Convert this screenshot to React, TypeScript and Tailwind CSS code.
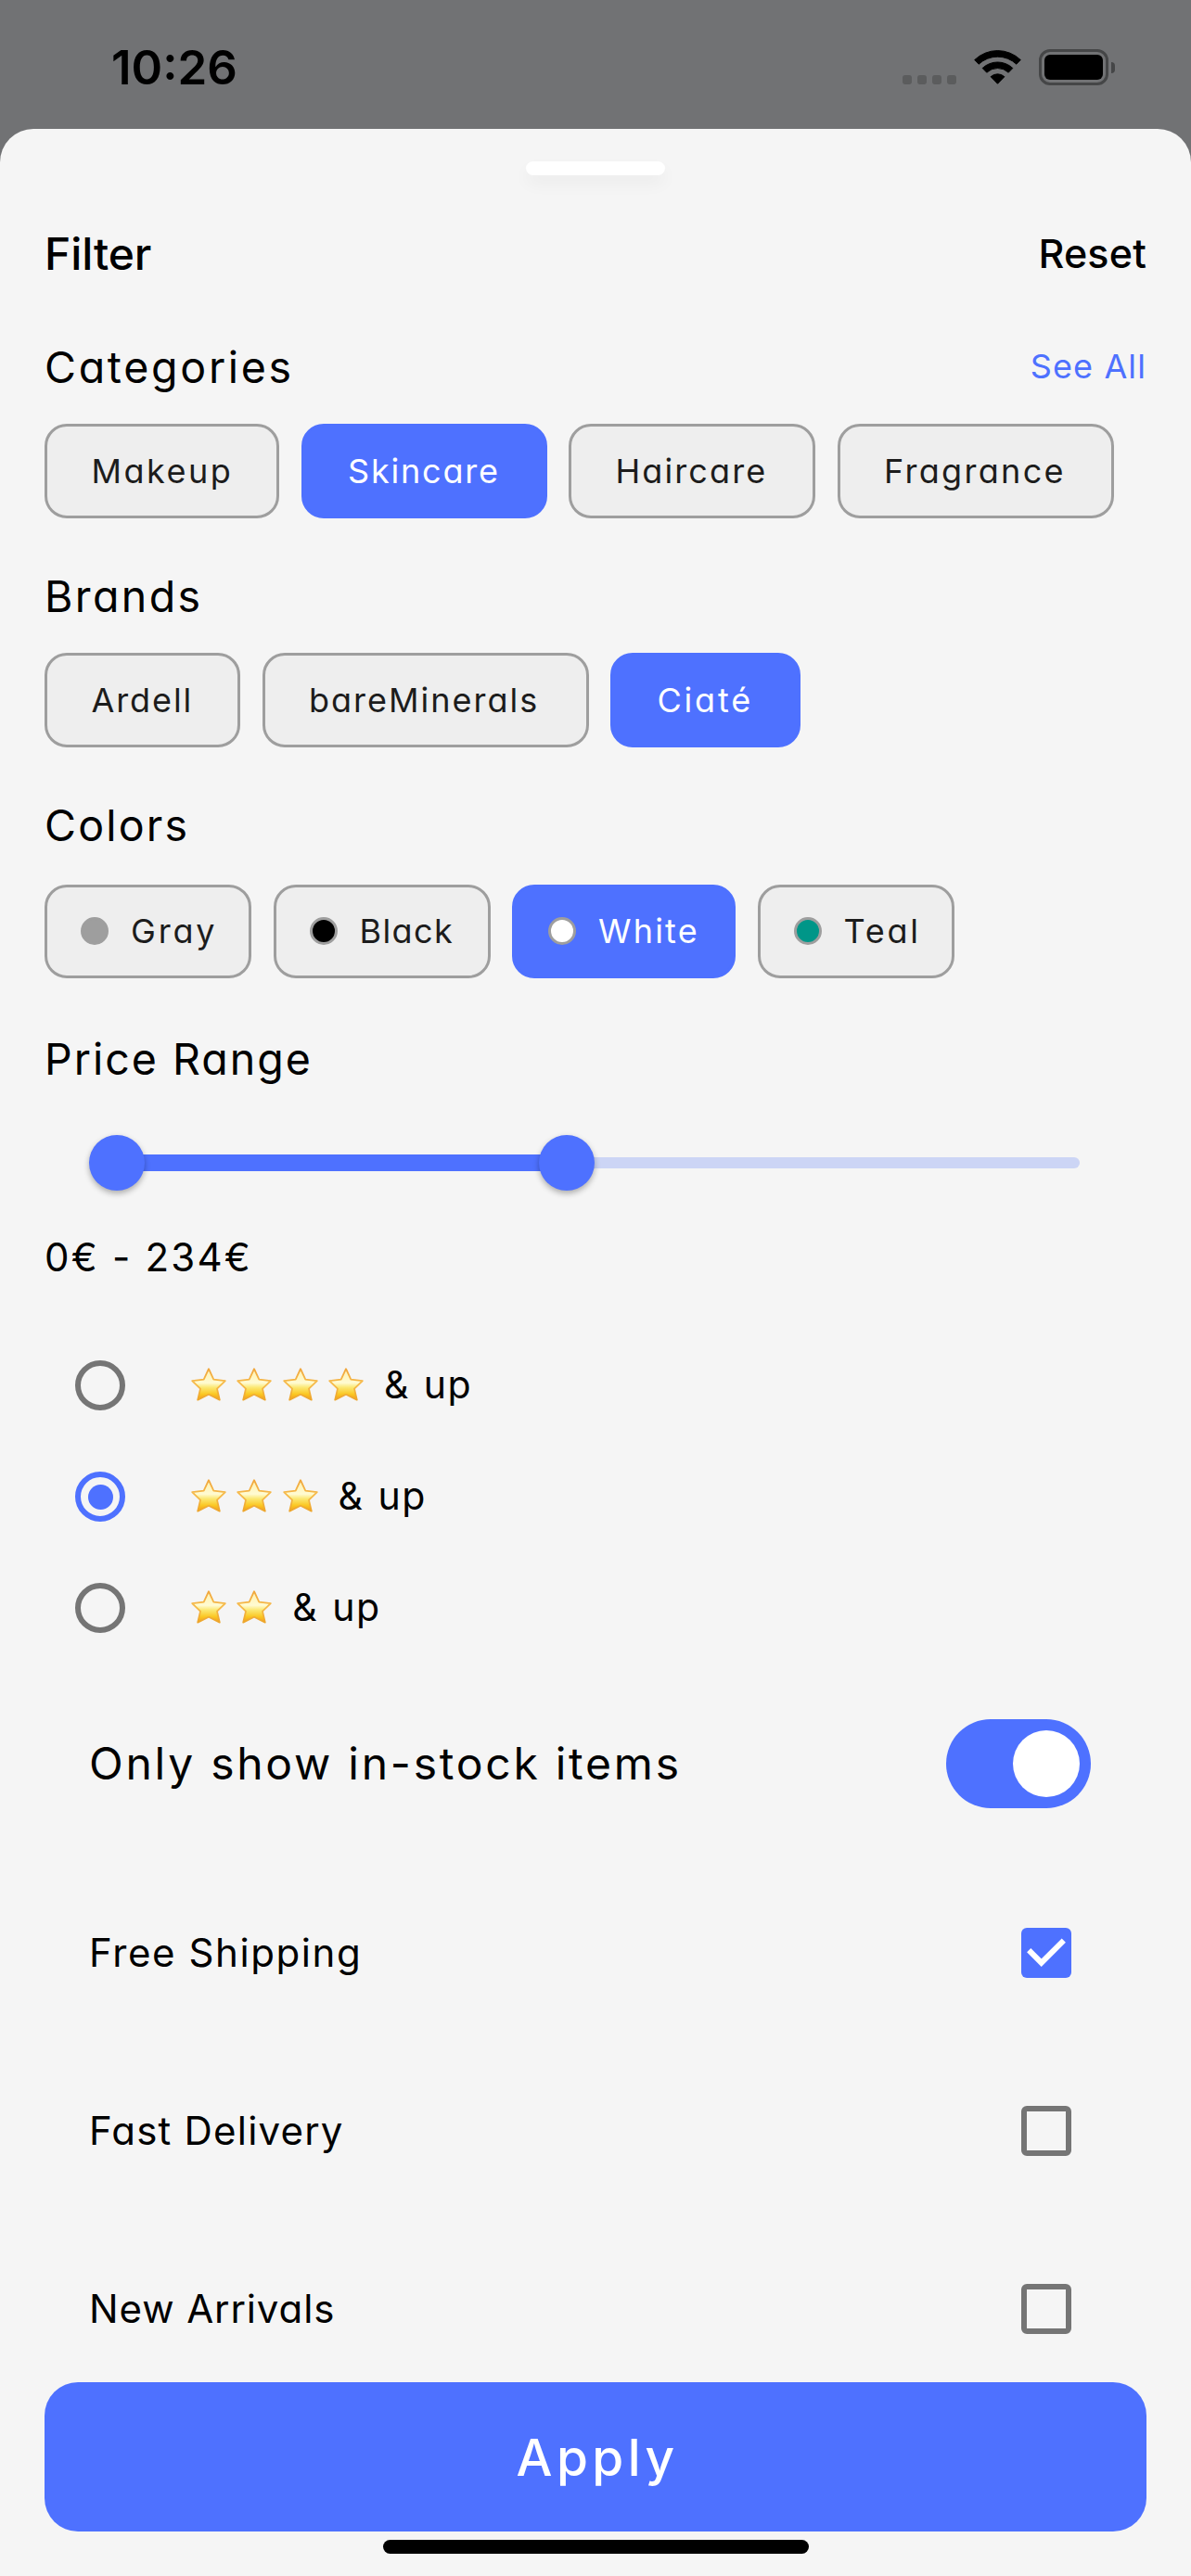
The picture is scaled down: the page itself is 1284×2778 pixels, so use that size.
type ChipData = {
  label: string;
  width: string;
  tracking: string;
  active?: boolean;
  dot?: string;
};

const categories: ChipData[] = [
  { label: "Makeup", width: "w-[253px]", tracking: "tracking-[2.5px]" },
  { label: "Skincare", width: "w-[265px]", tracking: "tracking-[1.8px]", active: true },
  { label: "Haircare", width: "w-[266px]", tracking: "tracking-[2.1px]" },
  { label: "Fragrance", width: "w-[298px]", tracking: "tracking-[2.3px]" },
];

const brands: ChipData[] = [
  { label: "Ardell", width: "w-[211px]", tracking: "tracking-[1.9px]" },
  { label: "bareMinerals", width: "w-[352px]", tracking: "tracking-[2px]" },
  { label: "Ciaté", width: "w-[205px]", tracking: "tracking-[2.8px]", active: true },
];

const colors: ChipData[] = [
  { label: "Gray", width: "w-[223px]", tracking: "tracking-[2.8px]", dot: "bg-[#9e9e9e]" },
  { label: "Black", width: "w-[234px]", tracking: "tracking-[1.4px]", dot: "bg-black" },
  { label: "White", width: "w-[241px]", tracking: "tracking-[2.2px]", dot: "bg-white", active: true },
  { label: "Teal", width: "w-[212px]", tracking: "tracking-[2.8px]", dot: "bg-[#009688]" },
];

const ratings = [
  { stars: 4, selected: false },
  { stars: 3, selected: true },
  { stars: 2, selected: false },
];

const options = [
  { label: "Free Shipping", tracking: "tracking-[1.6px]", checked: true },
  { label: "Fast Delivery", tracking: "tracking-[1.2px]", checked: false },
  { label: "New Arrivals", tracking: "tracking-[0.9px]", checked: false },
];

function Chip({ chip, height }: { chip: ChipData; height: string }) {
  return (
    <button
      className={`flex shrink-0 items-center rounded-[24px] border-[3px] pb-px text-[36px] leading-none font-normal ${height} ${chip.width} ${chip.tracking} ${
        chip.dot ? "pl-9" : "pl-[47.5px]"
      } ${chip.active ? "border-[#4e71ff] bg-[#4e71ff] text-white" : "border-[#9e9e9e] bg-[#eeeeee] text-[#1c1c1c]"}`}
    >
      {chip.dot && <span className={`mr-[24px] size-[30px] shrink-0 rounded-full border-[3px] border-[#9e9e9e] ${chip.dot}`} />}
      {chip.label}
    </button>
  );
}

function Heading({ children, tracking }: { children: string; tracking: string }) {
  return <h2 className={`flex h-[60px] items-center pb-px text-[46.5px] leading-none font-normal ${tracking}`}>{children}</h2>;
}

function Star() {
  return (
    <svg viewBox="0 0 38 36" className="h-[36px] w-[38px]">
      <defs>
        <linearGradient id="starFill" x1="0" y1="0" x2="0" y2="1">
          <stop offset="0" stopColor="#fff0ae" />
          <stop offset="0.45" stopColor="#fffbd2" />
          <stop offset="0.6" stopColor="#fbe872" />
          <stop offset="0.82" stopColor="#fbc722" />
          <stop offset="1" stopColor="#f39d18" />
        </linearGradient>
        <linearGradient id="starEdge" x1="0" y1="0" x2="0" y2="1">
          <stop offset="0" stopColor="#f0a63c" />
          <stop offset="0.5" stopColor="#f6bb4a" />
          <stop offset="1" stopColor="#eda52b" />
        </linearGradient>
      </defs>
      <path
        d="M19 1.2 L24.3 12.6 L36.8 14.1 L28 22.6 L30.8 34.6 L19 28.8 L7.2 34.6 L10 22.6 L1.2 14.1 L13.7 12.6 Z"
        fill="url(#starFill)"
        stroke="url(#starEdge)"
        strokeWidth="1.8"
        strokeLinejoin="round"
      />
    </svg>
  );
}

function StatusBar() {
  return (
    <div className="flex h-[139px] shrink-0 items-start pt-[53px]">
      <span className="ml-[120px] w-[160px] text-[51px] leading-[40px] font-semibold">10:26</span>
      <div className="mt-[28px] ml-[693px] flex gap-1.5">
        {[0, 1, 2, 3].map((i) => (
          <span key={i} className="size-2.5 rounded-[3px] bg-[#5b5c5d]" />
        ))}
      </div>
      <svg viewBox="0 0 51 37" className="mt-px ml-[19px] h-[37px] w-[51px] shrink-0">
        <g stroke="#000" strokeWidth="1" strokeLinejoin="round">
          <path d="M0.7 10.6 A35.7 35.7 0 0 1 50.3 10.6 L45.8 15.2 A29.6 29.6 0 0 0 5.2 15.2 Z" />
          <path d="M9.2 19.5 A23.7 23.7 0 0 1 41.8 19.5 L37.2 24.2 A17 17 0 0 0 13.8 24.2 Z" />
          <path d="M18.1 28.7 A11 11 0 0 1 32.9 28.7 L25.5 36.3 Z" />
        </g>
      </svg>
      <div className="ml-[19px] flex items-center gap-[3px]">
        <div className="h-[39px] w-[75px] rounded-[12px] border-[3px] border-[#454647] p-[3px]">
          <div className="h-full rounded-[6px] bg-black" />
        </div>
        <span className="h-3 w-1 rounded-r-full bg-[#454647]" />
      </div>
    </div>
  );
}

export default function App() {
  return (
    <div className="flex h-[2778px] w-[1284px] flex-col overflow-hidden bg-[#717274] font-['Inter','Noto_Sans',sans-serif] text-black [font-feature-settings:'cv11']">
      <StatusBar />
      <main className="flex flex-1 flex-col rounded-t-[36px] bg-[#f5f5f5] px-12">
        <div className="mt-[35px] h-[15px] w-[150px] shrink-0 self-center rounded-full bg-white shadow-[0_9px_18px_rgba(0,0,0,0.045)]" />

        <header className="mt-[55px] flex h-[60px] items-center justify-between">
          <h1 className="text-[48px] leading-none font-medium tracking-[-0.1px]">Filter</h1>
          <button className="pb-0.5 text-[43px] leading-none font-medium tracking-[0.2px]">Reset</button>
        </header>

        <div className="mt-[63px] flex items-center justify-between">
          <Heading tracking="tracking-[2.7px]">Categories</Heading>
          <button className="-mt-1 text-[36px] leading-none font-normal tracking-[1.1px] text-[#4e71ff]">See All</button>
        </div>
        <div className="mt-[30px] flex gap-[23.5px]">
          {categories.map((c) => (
            <Chip key={c.label} chip={c} height="h-[102px]" />
          ))}
        </div>

        <div className="mt-[55px]">
          <Heading tracking="tracking-[2.4px]">Brands</Heading>
        </div>
        <div className="mt-[30px] flex gap-[23.5px]">
          {brands.map((c) => (
            <Chip key={c.label} chip={c} height="h-[102px]" />
          ))}
        </div>

        <div className="mt-[55px]">
          <Heading tracking="tracking-[2.2px]">Colors</Heading>
        </div>
        <div className="mt-[33px] flex gap-[23.5px]">
          {colors.map((c) => (
            <Chip key={c.label} chip={c} height="h-[101px]" />
          ))}
        </div>

        <div className="mt-[58px]">
          <Heading tracking="tracking-[2px]">Price Range</Heading>
        </div>
        <div className="relative mx-12 mt-[51px] flex h-[60px] w-[1068px] items-center">
          <div className="h-3 w-full rounded-full bg-[#ccd5f5]" />
          <div className="absolute left-[30px] h-[18px] w-[485px] bg-[#4e71ff]" />
          <div className="absolute left-0 size-[60px] rounded-full bg-[#4e71ff] shadow-[0_3px_6px_rgba(0,0,0,0.3)]" />
          <div className="absolute left-[485px] size-[60px] rounded-full bg-[#4e71ff] shadow-[0_3px_6px_rgba(0,0,0,0.3)]" />
        </div>
        <p className="mt-[42px] flex h-[60px] items-center text-[42px] leading-none font-normal tracking-[2.2px]">0€ - 234€</p>

        <div className="mt-12 flex flex-col">
          {ratings.map((r) => (
            <label key={r.stars} className="flex h-[120px] items-center pl-[33px]">
              <span
                className={`flex size-[54px] items-center justify-center rounded-full border-[6px] ${
                  r.selected ? "border-[#4e71ff]" : "border-[#757575]"
                }`}
              >
                {r.selected && <span className="size-[27px] rounded-full bg-[#4e71ff]" />}
              </span>
              <span className="ml-[71px] flex gap-[11.3px] pb-0.5">
                {Array.from({ length: r.stars }, (_, i) => (
                  <Star key={i} />
                ))}
              </span>
              <span className="ml-[22px] pb-0.5 text-[41px] leading-none font-normal tracking-[1.5px] [word-spacing:2px]">&amp; up</span>
            </label>
          ))}
        </div>

        <div className="mt-[60px] flex h-24 items-center justify-between pr-[60px] pl-12">
          <span className="text-[48px] leading-none font-normal tracking-[2.75px]">Only show in-stock items</span>
          <span className="flex h-24 w-[156px] items-center justify-end rounded-full bg-[#4e71ff] pr-3">
            <span className="size-[72px] rounded-full bg-white" />
          </span>
        </div>

        <div className="mt-[60px] h-[559px] shrink-0 overflow-hidden">
          {options.map((o) => (
            <label key={o.label} className="flex h-[192px] items-center justify-between pr-[81px] pl-[48px]">
              <span className={`text-[42px] leading-none font-normal ${o.tracking}`}>{o.label}</span>
              {o.checked ? (
                <span className="size-[54px] rounded-[6px] bg-[#4e71ff]">
                  <svg viewBox="0 0 54 54" className="size-[54px]">
                    <path d="M8.2 24.2 L21.7 37.7 L45.8 13.6" fill="none" stroke="#fff" strokeWidth="6" />
                  </svg>
                </span>
              ) : (
                <span className="size-[54px] rounded-[6px] border-[6px] border-[#757575]" />
              )}
            </label>
          ))}
        </div>

        <button className="flex h-[161px] shrink-0 items-center justify-center rounded-[36px] bg-[#4e71ff] pt-0.5 pl-1 text-[55px] leading-none font-medium tracking-[4.4px] text-white">
          Apply
        </button>
        <div className="mt-[9px] h-[15px] w-[459px] shrink-0 self-center rounded-full bg-black" />
      </main>
    </div>
  );
}
